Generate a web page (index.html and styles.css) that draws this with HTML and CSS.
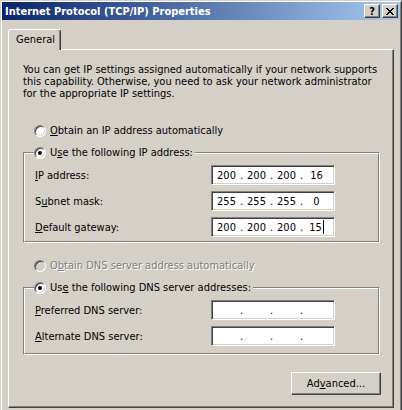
FILE: index.html
```html
<!DOCTYPE html>
<html lang="en">
<head>
    <meta charset="utf-8"/>
    <title>Internet Protocol (TCP/IP) Properties</title>
    <link rel="stylesheet" href="styles.css">
</head>
<body>
    <div class="window">
        <div class="titlebar">
            <span class="caption">Internet Protocol (TCP/IP) Properties</span>
            <div class="caption-buttons">
                <button class="cap-btn help">?</button>
                <button class="cap-btn close" aria-label="close">
                    <svg width="8" height="7" viewBox="0 0 8 7" shape-rendering="crispEdges">
                        <path fill="#000" d="M0 0h2v1H0zM6 0h2v1H6zM1 1h2v1H1zM5 1h2v1H5zM2 2h4v1H2zM3 3h2v1H3zM2 4h4v1H2zM1 5h2v1H1zM5 5h2v1H5zM0 6h2v1H0zM6 6h2v1H6z"/>
                    </svg>
                </button>
            </div>
        </div>

        <div class="tabs">
            <div class="tab">General</div>
        </div>

        <div class="panel">
            <p class="intro">
                You can get IP settings assigned automatically if your network supports<br>
                this capability. Otherwise, you need to ask your network administrator<br>
                for the appropriate IP settings.
            </p>

            <div class="radio-row auto-ip">
                <span class="radio"></span>
                <span><u>O</u>btain an IP address automatically</span>
            </div>

            <div class="group ip-group">
                <div class="group-inner">
                    <div class="legend">
                        <span class="radio checked"></span>
                        <span>U<u>s</u>e the following IP address:</span>
                    </div>
                    <div class="fields">
                        <span><u>I</u>P address:</span>
                        <div class="ipbox">
                            <span class="octet">200</span><span class="dot">.</span><span class="octet">200</span><span class="dot">.</span><span class="octet">200</span><span class="dot">.</span><span class="octet">16</span>
                        </div>
                        <span>S<u>u</u>bnet mask:</span>
                        <div class="ipbox">
                            <span class="octet">255</span><span class="dot">.</span><span class="octet">255</span><span class="dot">.</span><span class="octet">255</span><span class="dot">.</span><span class="octet">0</span>
                        </div>
                        <span><u>D</u>efault gateway:</span>
                        <div class="ipbox">
                            <span class="octet">200</span><span class="dot">.</span><span class="octet">200</span><span class="dot">.</span><span class="octet">200</span><span class="dot">.</span><span class="octet">15<span class="caret"></span></span>
                        </div>
                    </div>
                </div>
            </div>

            <div class="radio-row disabled auto-dns">
                <span class="radio"></span>
                <span>O<u>b</u>tain DNS server address automatically</span>
            </div>

            <div class="group dns-group">
                <div class="group-inner">
                    <div class="legend">
                        <span class="radio checked"></span>
                        <span>Us<u>e</u> the following DNS server addresses:</span>
                    </div>
                    <div class="fields">
                        <span><u>P</u>referred DNS server:</span>
                        <div class="ipbox">
                            <span class="octet"></span><span class="dot">.</span><span class="octet"></span><span class="dot">.</span><span class="octet"></span><span class="dot">.</span><span class="octet"></span>
                        </div>
                        <span><u>A</u>lternate DNS server:</span>
                        <div class="ipbox">
                            <span class="octet"></span><span class="dot">.</span><span class="octet"></span><span class="dot">.</span><span class="octet"></span><span class="dot">.</span><span class="octet"></span>
                        </div>
                    </div>
                </div>
            </div>

            <div class="actions">
                <button class="btn">Ad<u>v</u>anced...</button>
            </div>
        </div>
    </div>
</body>
</html>
```

FILE: styles.css
```css
html,
body {
    margin: 0;
    height: 410px;
    overflow: hidden;
}

body {
    background: #d4d0c8;
    color: #000;
    font-family: "DejaVu Sans Condensed", "DejaVu Sans", sans-serif;
    font-stretch: condensed;
    font-size: 11px;
    line-height: 13px;
}

u {
    text-decoration: underline;
    text-underline-offset: 1px;
}

/* window frame (bottom edge is cut off by the screenshot) */
.window {
    box-sizing: border-box;
    width: 402px;
    height: 410px;
    padding: 1px 1px 0;
    border: 1px solid;
    border-bottom: 0;
    border-color: #d4d0c8 #404040 #404040 #d4d0c8;
    box-shadow: inset 1px 1px #fff, inset -1px 0 #808080;
    background: #d4d0c8;
}

.titlebar {
    display: flex;
    align-items: center;
    height: 18px;
    padding: 0 2px 0 3px;
    background: linear-gradient(to right, #0a246a, #a6caf0);
}

.caption {
    flex: 1;
    color: #fff;
    font-weight: bold;
}

.caption-buttons {
    display: flex;
    gap: 2px;
}

.cap-btn,
.btn {
    box-sizing: border-box;
    padding: 0;
    border: 1px solid;
    border-color: #fff #404040 #404040 #fff;
    box-shadow: inset -1px -1px #808080;
    background: #d4d0c8;
    color: #000;
    font: inherit;
}

.cap-btn {
    display: flex;
    align-items: center;
    justify-content: center;
    width: 16px;
    height: 14px;
}

.cap-btn.help {
    font-weight: bold;
    font-size: 11px;
    line-height: 11px;
}

/* tab strip */
.tabs {
    display: flex;
    padding: 9px 6px 0;
}

.tab {
    position: relative;
    z-index: 1;
    box-sizing: border-box;
    width: 53px;
    height: 21px;
    margin-bottom: -1px;
    padding: 3px 0 0 7px;
    border: 1px solid;
    border-bottom: 0;
    border-color: #fff #404040 transparent #fff;
    border-radius: 3px 3px 0 0;
    box-shadow: inset -1px 0 #808080;
    background: #d4d0c8;
}

.panel {
    margin: 0 6px;
    padding: 14px 13px 12px 14px;
    border: 1px solid;
    border-color: #fff #404040 #404040 #fff;
    box-shadow: inset -1px -1px #808080;
}

.intro {
    margin: 0;
    line-height: 12px;
}

/* radios */
.radio-row {
    display: flex;
    align-items: center;
    gap: 4px;
    height: 13px;
    padding-left: 11px;
}

.auto-ip { margin-top: 24px; }
.auto-dns { margin-top: 16px; }

.radio {
    position: relative;
    flex: none;
    box-sizing: border-box;
    width: 12px;
    height: 12px;
    border: 1px solid;
    border-color: #808080 #fff #fff #808080;
    border-radius: 50%;
    box-shadow: inset 1px 1px #404040, inset -1px -1px #d4d0c8;
    background: #fff;
}

.radio.checked::after {
    content: "";
    position: absolute;
    left: 3px;
    top: 3px;
    width: 4px;
    height: 4px;
    border-radius: 50%;
    background: #000;
}

.disabled {
    color: #808080;
    text-shadow: 1px 1px #fff;
}

.disabled .radio {
    background: #d4d0c8;
}

/* group boxes */
.group {
    border: 1px solid;
    border-color: #808080 #fff #fff #808080;
}

.ip-group { margin-top: 15px; }
.dns-group { margin-top: 15px; }

.group-inner {
    padding: 0 0 4px 10px;
    border: 1px solid;
    border-color: #fff #808080 #808080 #fff;
}

.dns-group .group-inner { padding-bottom: 7px; }

.legend {
    display: flex;
    align-items: center;
    gap: 4px;
    width: fit-content;
    height: 13px;
    margin: -8px 0 0 -1px;
    padding-right: 2px;
    background: #d4d0c8;
}

.fields {
    display: grid;
    grid-template-columns: 176px 124px;
    grid-auto-rows: 20px;
    row-gap: 6px;
    align-items: center;
    margin-top: 6px;
}

.ipbox {
    display: flex;
    align-items: center;
    box-sizing: border-box;
    height: 20px;
    padding-left: 1px;
    border: 1px solid;
    border-color: #808080 #fff #fff #808080;
    box-shadow: inset 1px 1px #404040, inset -1px -1px #d4d0c8;
    background: #fff;
}

.octet {
    display: flex;
    align-items: center;
    justify-content: center;
    width: 27px;
    height: 13px;
}

.dot {
    display: flex;
    justify-content: center;
    width: 3px;
}

.caret {
    display: inline-block;
    width: 1px;
    height: 14px;
    margin-left: 1px;
    background: #000;
}

.actions {
    display: flex;
    justify-content: flex-end;
    margin: 17px -1px 0 0;
}

.btn {
    width: 90px;
    height: 23px;
}
```
